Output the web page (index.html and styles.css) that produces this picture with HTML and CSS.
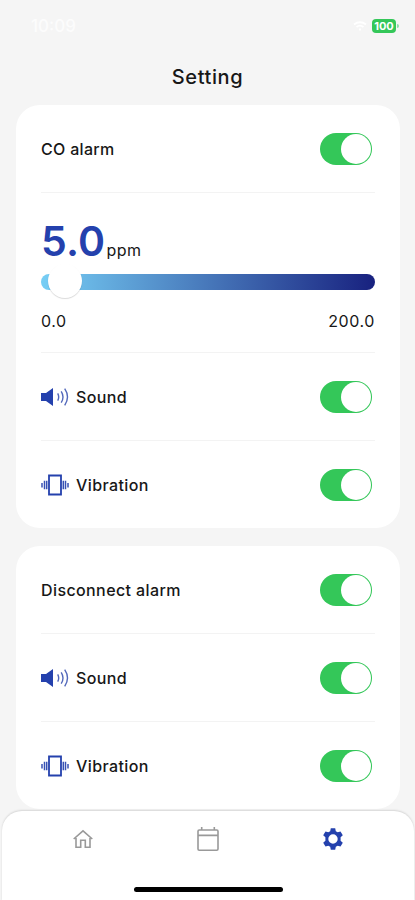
FILE: index.html
```html
<!DOCTYPE html>
<html lang="en">
<head>
<meta charset="utf-8">
<title>Setting</title>
<link rel="stylesheet" href="styles.css">
</head>
<body>
<svg class="defs" aria-hidden="true">
  <symbol id="sound" viewBox="0 0 28 20">
    <path d="M0 6H5L12 1V19L5 14H0Z" fill="#2441ad"/>
    <path d="M16.7 6.3Q18.7 10 16.7 13.7M20.2 4.3Q23.8 10 20.2 15.7M23.7 1.7Q29.3 10 23.7 18.3" fill="none" stroke="#5268bb" stroke-width="1.4"/>
  </symbol>
  <symbol id="vibration" viewBox="0 0 28 22">
    <path d="M8 1.5H20V20.5H8Z" fill="none" stroke="#2441ad" stroke-width="1.8"/>
    <path d="M1 9V13.5M3.5 6.7V15.3M5.7 6.7V15.3M22.3 6.7V15.3M24.5 6.7V15.3M27 9V13.5" fill="none" stroke="#3852b4" stroke-width="1.5"/>
  </symbol>
</svg>
<div class="phone">
  <header class="status">
    <span class="time">10:09</span>
    <span class="indicators">
      <svg width="14" height="10" viewBox="0 0 14 10" fill="none" stroke="#fff" stroke-width="1.8"><path d="M1 3.5Q7-1 13 3.5M3.5 6Q7 3.2 10.5 6M6 8.5H8"/></svg>
      <span class="battery">100</span><i class="tip"></i>
    </span>
  </header>
  <h1>Setting</h1>
  <main>
    <section class="card">
      <div class="row"><span class="label co">CO alarm</span><span class="toggle"></span></div>
      <div class="level">
        <div class="reading"><strong>5.0</strong><span>ppm</span></div>
        <div class="track"><span class="thumb"></span></div>
        <div class="range"><span>0.0</span><span>200.0</span></div>
      </div>
      <div class="row"><svg class="icon"><use href="#sound"/></svg><span class="label">Sound</span><span class="toggle"></span></div>
      <div class="row"><svg class="icon"><use href="#vibration"/></svg><span class="label">Vibration</span><span class="toggle"></span></div>
    </section>
    <section class="card">
      <div class="row"><span class="label">Disconnect alarm</span><span class="toggle"></span></div>
      <div class="row"><svg class="icon"><use href="#sound"/></svg><span class="label">Sound</span><span class="toggle"></span></div>
      <div class="row"><svg class="icon"><use href="#vibration"/></svg><span class="label">Vibration</span><span class="toggle"></span></div>
    </section>
  </main>
  <nav>
    <div class="tabs">
      <svg viewBox="0 0 24 24" fill="none" stroke="#999" stroke-width="1.6"><path d="M2.7 12 12 3.8 21.3 12M5 11V20.2H9.7V13.2H14.3V20.2H19V11"/></svg>
      <svg viewBox="0 0 24 24" fill="none" stroke="#999" stroke-width="1.6"><rect x="2" y="3" width="20" height="20.2" rx="1.2"/><path d="M2 8.4H22M5.7 0V3M18.3 0V3"/></svg>
      <svg viewBox="0 0 24 24"><path fill="#2441ad" fill-rule="evenodd" d="M9.8 1.3H14.2L14.8 4.2 16.7 5.3 19.5 4.4 21.8 8.2 19.6 10.3V13.7L21.8 15.8 19.5 19.6 16.7 18.7 14.8 19.8 14.2 22.7H9.8L9.2 19.8 7.3 18.7 4.5 19.6 2.2 15.8 4.4 13.7V10.3L2.2 8.2 4.5 4.4 7.3 5.3 9.2 4.2ZM12 7.3A4.7 4.7 0 1 0 12 16.7 4.7 4.7 0 0 0 12 7.3Z"/></svg>
    </div>
    <div class="home-indicator"></div>
  </nav>
</div>
</body>
</html>
```
FILE: styles.css
```css
* { box-sizing: border-box; }
body {
  margin: 0;
  background: #f5f5f5;
  color: #171717;
  font-family: Inter, "Liberation Sans", sans-serif;
}
.defs { position: absolute; width: 0; height: 0; }
.phone { height: 900px; display: flex; flex-direction: column; overflow: hidden; }
.status {
  height: 52px;
  flex: none;
  display: flex;
  align-items: center;
  justify-content: space-between;
  padding: 0 16px 0 31px;
}
.time { color: #fcfcfc; font-size: 17px; font-weight: 500; }
.indicators { display: flex; align-items: center; }
.battery {
  width: 24px;
  height: 14px;
  margin-left: 5px;
  border-radius: 4px;
  background: #34c759;
  color: #fff;
  font-size: 11px;
  line-height: 14px;
  font-weight: 700;
  text-align: center;
}
.tip { width: 2px; height: 4px; margin-left: 1px; border-radius: 0 2px 2px 0; background: #8eddaa; }
h1 {
  height: 53px;
  flex: none;
  margin: 0;
  font-size: 20px;
  line-height: 50px;
  font-weight: 500;
  letter-spacing: .6px;
  text-align: center;
}
main { flex: none; display: flex; flex-direction: column; gap: 18px; padding: 0 15px 0 16px; }
.card { border-radius: 24px; background: #fff; padding: 0 25px; }
.row { height: 88px; display: flex; align-items: center; border-bottom: 1px solid #f3f3f3; }
.row:last-child { height: 87px; border-bottom: 0; }
.label { font-size: 16px; font-weight: 500; letter-spacing: .4px; }
.co { letter-spacing: .3px; }
.icon { width: 28px; height: 22px; margin-right: 7px; }
.toggle {
  width: 52px;
  height: 32px;
  margin-left: auto;
  margin-right: 3px;
  border-radius: 16px;
  background: #34c759;
  padding: 1px;
  display: flex;
  justify-content: flex-end;
}
.toggle::after { content: ""; width: 30px; height: 30px; border-radius: 50%; background: #fff; }
.level { height: 160px; border-bottom: 1px solid #f3f3f3; padding-top: 23px; }
.reading { height: 58px; display: flex; align-items: baseline; }
.reading strong { color: #2441ad; font-size: 41px; line-height: 50px; font-weight: 600; letter-spacing: .2px; }
.reading span { font-size: 16px; margin-left: 1px; letter-spacing: .5px; }
.track { height: 16px; border-radius: 8px; background: linear-gradient(90deg, #76cef5, #18217f); }
.thumb {
  display: block;
  width: 34px;
  height: 34px;
  margin-left: 7px;
  border-radius: 50%;
  background: #fff;
  box-shadow: 0 1px 1px rgba(0, 0, 0, .15);
  transform: translateY(-10px);
}
.range { display: flex; justify-content: space-between; margin-top: 20px; font-size: 16px; line-height: 22px; letter-spacing: .6px; }
nav {
  height: 90px;
  flex: none;
  margin: 2px 1px 0 2px;
  border-radius: 20px 20px 0 0;
  background: #fff;
  box-shadow: 0 -1px 2px rgba(0, 0, 0, .13);
  display: flex;
  flex-direction: column;
  align-items: center;
}
.tabs { align-self: stretch; display: grid; grid-template-columns: repeat(3, 1fr); justify-items: center; margin: 16px 18px 0; }
.tabs svg { width: 24px; height: 24px; }
.home-indicator { width: 149px; height: 5px; margin-top: 36px; border-radius: 3px; background: #000; }
```
